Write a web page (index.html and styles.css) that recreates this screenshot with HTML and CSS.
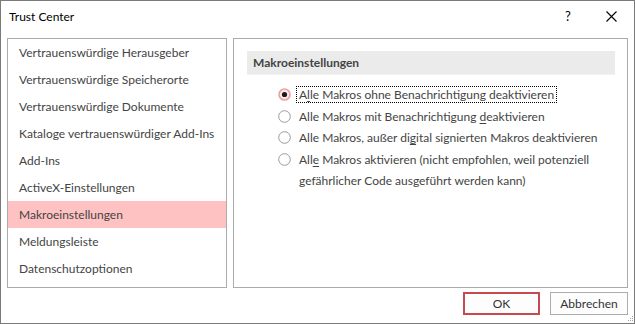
FILE: index.html
```html
<!DOCTYPE html>
<html lang="de">
<head>
<meta charset="utf-8">
<title>Trust Center</title>
<link rel="stylesheet" href="styles.css">
</head>
<body>
<div class="window">
  <div class="titlebar">
    <span class="title">Trust Center</span>
    <span class="help">?</span>
    <span class="close">
      <svg width="11" height="11" viewBox="0 0 11 11"><path d="M0.5 0.5 L10.5 10.5 M10.5 0.5 L0.5 10.5" stroke="#000" stroke-width="1.1" fill="none"/></svg>
    </span>
  </div>
  <div class="main">
    <ul class="nav">
      <li class="nav-item">Vertrauenswürdige Herausgeber</li>
      <li class="nav-item">Vertrauenswürdige Speicherorte</li>
      <li class="nav-item">Vertrauenswürdige Dokumente</li>
      <li class="nav-item">Kataloge vertrauenswürdiger Add-Ins</li>
      <li class="nav-item">Add-Ins</li>
      <li class="nav-item">ActiveX-Einstellungen</li>
      <li class="nav-item active">Makroeinstellungen</li>
      <li class="nav-item">Meldungsleiste</li>
      <li class="nav-item">Datenschutzoptionen</li>
    </ul>
    <div class="content">
      <div class="section-head">Makroeinstellungen</div>
      <div class="options">
        <div class="opt">
          <span class="radio checked"><svg width="13" height="13" viewBox="0 0 13 13"><circle cx="6.5" cy="6.5" r="5.5" fill="#fde8e8" stroke="#eaa3a3" stroke-width="1.6"/><circle cx="6.5" cy="6.5" r="2.6" fill="#1a1a1a"/></svg></span>
          <span class="lbl focus">A<u>l</u>le Makros ohne Benachrichtigung deaktivieren</span>
        </div>
        <div class="opt">
          <span class="radio"><svg width="13" height="13" viewBox="0 0 13 13"><circle cx="6.5" cy="6.5" r="5.8" fill="#fff" stroke="#9a9a9a" stroke-width="1"/></svg></span>
          <span class="lbl">Alle Makros mit Benachrichtigung <u>d</u>eaktivieren</span>
        </div>
        <div class="opt">
          <span class="radio"><svg width="13" height="13" viewBox="0 0 13 13"><circle cx="6.5" cy="6.5" r="5.8" fill="#fff" stroke="#9a9a9a" stroke-width="1"/></svg></span>
          <span class="lbl">Alle Makros, außer di<u>g</u>ital signierten Makros deaktivieren</span>
        </div>
        <div class="opt">
          <span class="radio"><svg width="13" height="13" viewBox="0 0 13 13"><circle cx="6.5" cy="6.5" r="5.8" fill="#fff" stroke="#9a9a9a" stroke-width="1"/></svg></span>
          <span class="lbl">All<u>e</u> Makros aktivieren (nicht empfohlen, weil potenziell<br>gefährlicher Code ausgeführt werden kann)</span>
        </div>
      </div>
    </div>
  </div>
  <div class="footer">
    <button class="btn ok">OK</button>
    <button class="btn">Abbrechen</button>
  </div>
  <svg class="grip" width="7" height="7" viewBox="0 0 7 7">
    <rect x="5" y="0" width="1" height="1" fill="#a0a0a0"/>
    <rect x="3" y="2" width="1" height="1" fill="#a0a0a0"/>
    <rect x="5" y="2" width="1" height="1" fill="#a0a0a0"/>
    <rect x="1" y="4" width="1" height="1" fill="#a0a0a0"/>
    <rect x="3" y="4" width="1" height="1" fill="#a0a0a0"/>
    <rect x="5" y="4" width="1" height="1" fill="#a0a0a0"/>
  </svg>
</div>
</body>
</html>
```
FILE: styles.css
```css
* { box-sizing: border-box; }
html, body { margin: 0; padding: 0; background: #fff; }
body { font-family: Lato, "Liberation Sans", sans-serif; font-size: 12px; color: #444; }

.window {
  position: relative;
  width: 635px;
  height: 324px;
  border: 1px solid #7a7a7a;
  background: #fff;
  display: flex;
  flex-direction: column;
}

.titlebar {
  height: 30px;
  display: flex;
  align-items: center;
  padding-left: 8px;
  color: #000;
}
.title { flex: 1; font-size: 12px; }
.help { width: 16px; text-align: center; margin-right: 30px; font-size: 13px; }
.close { width: 11px; height: 11px; display: flex; margin-right: 17px; }

.main {
  margin-top: 7px;
  height: 250px;
  display: flex;
  gap: 6px;
  padding: 0 6px;
}

.nav {
  list-style: none;
  margin: 0;
  padding: 0;
  width: 220px;
  border: 1px solid #ababab;
}
.nav-item {
  height: 27px;
  line-height: 27px;
  padding-left: 11px;
  white-space: nowrap;
}
.nav-item.active { background: #ffc2c2; }

.content {
  width: 395px;
  border: 1px solid #ababab;
  padding: 12px 12px 0 13px;
}
.section-head {
  height: 24px;
  line-height: 24px;
  background: #ebebeb;
  border-bottom: 1px solid #f1f1f1;
  padding-left: 6px;
  font-weight: bold;
}

.options {
  margin-top: 11px;
  padding-left: 31px;
  display: flex;
  flex-direction: column;
  gap: 4.5px;
}
.opt {
  display: flex;
  align-items: flex-start;
  gap: 5px;
  line-height: 15px;
}
.radio { width: 13px; height: 13px; margin-top: 2px; display: flex; }
.lbl {
  border: 1px dotted transparent;
  padding: 0 2px;
  white-space: nowrap;
}
.opt:last-child .lbl { line-height: 21px; margin-top: -3px; }
.lbl.focus { border-color: #000; }
.lbl u { text-underline-offset: 2px; }

.footer {
  display: flex;
  justify-content: flex-end;
  gap: 10px;
  padding: 4px 6px 0 0;
}
.btn {
  height: 23px;
  width: 78px;
  background: #fdfdfd;
  border: 1px solid #adadad;
  font-family: Lato, "Liberation Sans", sans-serif;
  font-size: 12px;
  color: #333;
  padding: 0;
}
.btn.ok { width: 77px; border: 2px solid #c8494e; }

.grip { position: absolute; right: 0; bottom: 0; }
```
